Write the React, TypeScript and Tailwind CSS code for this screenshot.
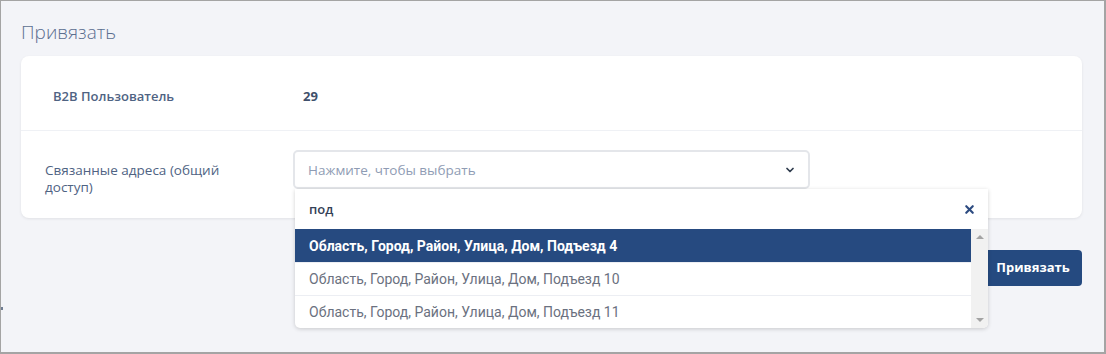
import { ChevronDown, X } from 'lucide-react';

const options = [
  'Область, Город, Район, Улица, Дом, Подъезд 4',
  'Область, Город, Район, Улица, Дом, Подъезд 10',
  'Область, Город, Район, Улица, Дом, Подъезд 11',
];

function AddressSelect() {
  return (
    <div className="relative w-[517px]">
      <div className="flex h-[39px] items-center justify-between rounded-[5px] border-2 border-[#e4e6ea] bg-white pl-[13px] pr-3">
        <span className="pt-[2px] text-[13.5px] text-[#8f9cb4]">Нажмите, чтобы выбрать</span>
        <ChevronDown size={12} strokeWidth={3.5} className="text-[#2f3b4d]" />
      </div>

      <div className="absolute left-[2px] top-[39px] z-10 w-[693px] overflow-hidden rounded-b-[5px] bg-white shadow-[0_1px_4px_rgba(0,0,0,0.18)]">
        <div className="flex h-10 items-center justify-between pl-[14px] pr-3">
          <span className="pt-[2px] text-[13px] font-semibold text-[#344157]">под</span>
          <X size={13} strokeWidth={4} className="text-[#2c4a80]" />
        </div>
        <div className="flex">
          <ul className="flex-1">
            {options.map((opt, i) => (
              <li
                key={opt}
                className={
                  i === 0
                    ? 'flex h-[33px] items-center bg-[#264a80] pl-[14px] pt-[1px] font-["Roboto",sans-serif] text-[14px] font-bold text-white'
                    : 'flex h-[33px] items-center border-t border-[#eceef3] pl-[14px] pt-[1px] font-["Roboto",sans-serif] text-[14px] text-[#6b7180]'
                }
              >
                {opt}
              </li>
            ))}
          </ul>
          <div className="flex w-[17px] flex-col items-center justify-between bg-[#f1f1f1] py-[6px]">
            <span className="h-0 w-0 border-x-[4px] border-b-[4px] border-x-transparent border-b-[#a3a3a3]" />
            <span className="h-0 w-0 border-x-[4px] border-t-[4px] border-x-transparent border-t-[#a3a3a3]" />
          </div>
        </div>
      </div>
    </div>
  );
}

export default function App() {
  return (
    <div className="relative h-[354px] w-[1106px] border-b-2 border-l border-r-2 border-t border-[#a4a4a4] bg-[#f3f4f8] pl-5 pr-[22px] pt-[18px] font-['Open_Sans',sans-serif]">
      <h1 className="text-[19px] font-light leading-[26px] text-[#5b6f90]">Привязать</h1>

      <div className="mt-[11px] rounded-lg bg-white shadow-[0_1px_3px_rgba(0,0,0,0.08)]">
        <div className="flex h-[75px] items-center border-b border-[#eff1f5] pt-[7px]">
          <div className="w-[282px] pl-8 text-[13px] font-semibold text-[#4f6383]">B2B Пользователь</div>
          <div className="text-[13px] font-bold text-[#3f506b]">29</div>
        </div>
        <div className="flex pb-[22px] pt-[19px]">
          <div className="w-[272px] pl-6 pt-[12px]">
            <div className="w-[205px] text-[13.5px] font-medium leading-[17px] text-[#4f6383]">
              Связанные адреса (общий доступ)
            </div>
          </div>
          <AddressSelect />
        </div>
      </div>

      <div className="mt-8 flex justify-end">
        <button className="h-9 w-[98px] rounded-[4px] bg-[#254a80] text-[13px] font-bold text-white">
          Привязать
        </button>
      </div>

      <span className="absolute left-0 top-[306px] h-[3px] w-[2px] bg-[#6f7d93]" />
    </div>
  );
}
